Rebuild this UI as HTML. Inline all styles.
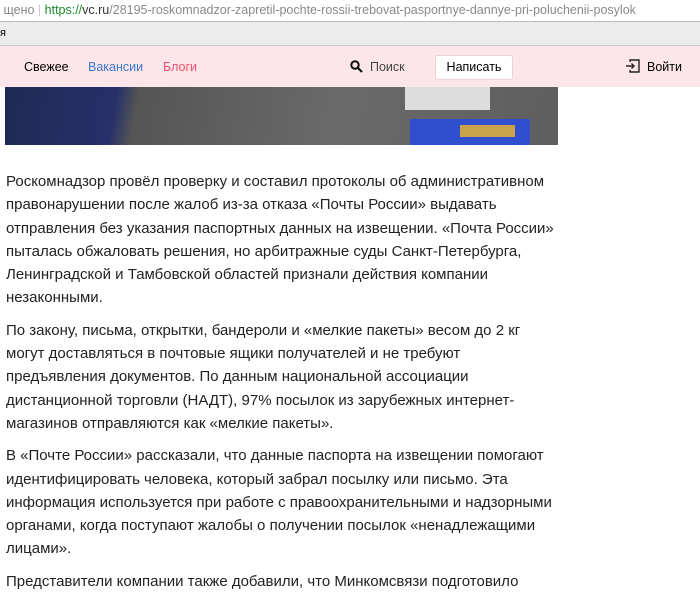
<!DOCTYPE html>
<html><head><meta charset="utf-8"><style>
body{margin:0;width:700px;height:595px;overflow:hidden;background:#fff;font-family:"Liberation Sans",Arial,sans-serif;position:relative}
.addr{position:absolute;top:0;left:0;width:700px;height:21px;background:#fff;border-bottom:1px solid #bbb;font-size:12.5px;line-height:21px;color:#888;white-space:nowrap}
.addr .g{color:#1a8a2a}
.book{position:absolute;top:22px;left:0;width:700px;height:23px;background:#ececec;border-bottom:1px solid #c8c8c8;font-size:11px;line-height:22px}
.nav{position:absolute;top:46px;left:0;width:700px;height:41px;background:#fde6ea;font-size:12.5px}
.nav span{position:absolute;top:14px}
.btn{position:absolute;left:435px;top:9px;width:76px;height:23px;background:#fff;border:1px solid #f0d0d6;border-radius:3px;text-align:center;line-height:23px;font-size:12.5px}
.img{position:absolute;left:5px;top:87px;width:553px;height:58px;background:linear-gradient(100deg,#1f2a55 0,#26306a 20%,#555 24%,#6a6a6a 60%,#5e5e5e 100%)}
.text{position:absolute;left:6px;top:170px;width:550px;font-size:15px;line-height:23.3px;color:#222}
.text p{margin:0 0 9px}
</style></head><body>
<div class="addr">&nbsp;щено <span style="color:#ccc">|</span> <span class="g">https://</span><span style="color:#333">vc.ru</span>/28195-roskomnadzor-zapretil-pochte-rossii-trebovat-pasportnye-dannye-pri-poluchenii-posylok</div>
<div class="book">я</div>
<div class="nav">
<span style="left:24px">Свежее</span>
<span style="left:88px;color:#3a78c8">Вакансии</span>
<span style="left:163px;color:#e8506e">Блоги</span>
<svg style="position:absolute;left:350px;top:14px" width="13" height="13" viewBox="0 0 13 13"><circle cx="5" cy="5" r="3.7" fill="none" stroke="#111" stroke-width="2"/><path d="M8 8l4 4" stroke="#111" stroke-width="2.2"/></svg>
<span style="left:370px;color:#444">Поиск</span>
<div class="btn">Написать</div>
<svg style="position:absolute;left:625px;top:12px" width="16" height="16" viewBox="0 0 16 16"><path d="M5 4V2h9v12H5v-2" fill="none" stroke="#222" stroke-width="1.4"/><path d="M1 8h8M6.5 5.5L9 8l-2.5 2.5" fill="none" stroke="#222" stroke-width="1.4"/></svg>
<span style="left:647px">Войти</span>
</div>
<div class="img">
<div style="position:absolute;left:400px;top:0;width:85px;height:23px;background:#ddd"></div>
<div style="position:absolute;left:405px;top:32px;width:120px;height:26px;background:#2f4fd0"></div>
<div style="position:absolute;left:455px;top:38px;width:55px;height:12px;background:#c9a24a"></div>
</div>
<div class="text">
<p>Роскомнадзор провёл проверку и составил протоколы об административном правонарушении после жалоб из-за отказа «Почты России» выдавать отправления без указания паспортных данных на извещении. «Почта России» пыталась обжаловать решения, но арбитражные суды Санкт-Петербурга, Ленинградской и Тамбовской областей признали действия компании незаконными.</p>
<p>По закону, письма, открытки, бандероли и «мелкие пакеты» весом до 2 кг могут доставляться в почтовые ящики получателей и не требуют предъявления документов. По данным национальной ассоциации дистанционной торговли (НАДТ), 97% посылок из зарубежных интернет-магазинов отправляются как «мелкие пакеты».</p>
<p>В «Почте России» рассказали, что данные паспорта на извещении помогают идентифицировать человека, который забрал посылку или письмо. Эта информация используется при работе с правоохранительными и надзорными органами, когда поступают жалобы о получении посылок «ненадлежащими лицами».</p>
<p>Представители компании также добавили, что Минкомсвязи подготовило</p>
</div>
</body></html>
